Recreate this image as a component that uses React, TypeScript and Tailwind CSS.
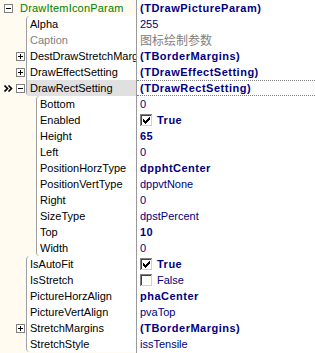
import React from "react";

type Val = { text: string; bold?: boolean; gray?: boolean; check?: boolean; cjk?: boolean };
type Row = { name: string; val: Val; exp?: "+" | "-"; sel?: boolean; gray?: boolean };

const segA: Row[] = [
  { name: "Alpha", val: { text: "255" } },
  { name: "Caption", gray: true, val: { text: "图标绘制参数", gray: true, cjk: true } },
  { name: "DestDrawStretchMargi", exp: "+", val: { text: "(TBorderMargins)", bold: true } },
  { name: "DrawEffectSetting", exp: "+", val: { text: "(TDrawEffectSetting)", bold: true } },
  { name: "DrawRectSetting", exp: "-", sel: true, val: { text: "(TDrawRectSetting)", bold: true } },
];

const segB: Row[] = [
  { name: "Bottom", val: { text: "0" } },
  { name: "Enabled", val: { text: "True", bold: true, check: true } },
  { name: "Height", val: { text: "65", bold: true } },
  { name: "Left", val: { text: "0" } },
  { name: "PositionHorzType", val: { text: "dpphtCenter", bold: true } },
  { name: "PositionVertType", val: { text: "dppvtNone" } },
  { name: "Right", val: { text: "0" } },
  { name: "SizeType", val: { text: "dpstPercent" } },
  { name: "Top", val: { text: "10", bold: true } },
  { name: "Width", val: { text: "0" } },
];

const segC: Row[] = [
  { name: "IsAutoFit", val: { text: "True", bold: true, check: true } },
  { name: "IsStretch", val: { text: "False", check: false } },
  { name: "PictureHorzAlign", val: { text: "phaCenter", bold: true } },
  { name: "PictureVertAlign", val: { text: "pvaTop" } },
  { name: "StretchMargins", exp: "+", val: { text: "(TBorderMargins)", bold: true } },
  { name: "StretchStyle", val: { text: "issTensile" } },
];

const gutterRows: Row[] = [...segA, ...segB, ...segC];

function Expander({ sign }: { sign: "+" | "-" }) {
  return (
    <svg width="9" height="9" viewBox="0 0 9 9" shapeRendering="crispEdges" className="block">
      <rect x="0.5" y="0.5" width="8" height="8" fill="white" stroke="#808080" />
      <rect x="2" y="4" width="5" height="1" fill="black" />
      {sign === "+" && <rect x="4" y="2" width="1" height="5" fill="black" />}
    </svg>
  );
}

function Chevrons() {
  return (
    <svg width="9" height="7" viewBox="0 0 9 7" className="block">
      <path d="M0.5 0.5 L3.5 3.5 L0.5 6.5 M4.5 0.5 L7.5 3.5 L4.5 6.5" fill="none" stroke="black" strokeWidth="1.6" />
    </svg>
  );
}

function CheckBox({ on }: { on: boolean }) {
  const check = [
    [3, 5], [4, 6], [5, 7], [6, 6], [7, 5], [8, 4], [9, 3],
  ];
  return (
    <svg width="13" height="13" viewBox="0 0 13 13" shapeRendering="crispEdges" className="block">
      <rect x="0" y="0" width="13" height="13" fill="white" />
      <rect x="0" y="0" width="12" height="1" fill="#808080" />
      <rect x="0" y="0" width="1" height="12" fill="#808080" />
      <rect x="1" y="1" width="10" height="1" fill="#404040" />
      <rect x="1" y="1" width="1" height="10" fill="#404040" />
      <rect x="0" y="12" width="13" height="1" fill="#ffffff" />
      <rect x="12" y="0" width="1" height="13" fill="#ffffff" />
      <rect x="1" y="11" width="11" height="1" fill="#d4d0c8" />
      <rect x="11" y="1" width="1" height="11" fill="#d4d0c8" />
      {on && check.map(([x, y]) => <rect key={x} x={x} y={y} width="1" height="3" fill="black" />)}
    </svg>
  );
}

function NameRow({ r }: { r: Row }) {
  return (
    <div
      className={`h-4 pl-[3px] whitespace-nowrap overflow-hidden leading-4 ${
        r.sel ? "bg-[#e0e0e0]" : ""
      } ${r.gray ? "text-[#808080]" : "text-black"}`}
    >
      {r.name}
    </div>
  );
}

function ValueCell({ r }: { r: Row }) {
  const v = r.val;
  const color = v.gray ? "text-[#808080]" : "text-[#000080]";
  return (
    <div
      className={`h-4 pl-[3px] flex items-center whitespace-nowrap overflow-hidden ${
        r.sel ? "border-y border-dotted border-[#808080]" : ""
      }`}
    >
      {v.check !== undefined && (
        <span className="mr-[4px]">
          <CheckBox on={v.check} />
        </span>
      )}
      <span
        className={`${color} ${v.bold ? "font-bold tracking-[0.5px]" : ""} ${
          v.cjk ? "text-[12px] font-['Noto_Sans_CJK_SC',sans-serif]" : ""
        } leading-4`}
      >
        {v.text}
      </span>
    </div>
  );
}

export default function App() {
  return (
    <div className="w-[315px] h-[353px] overflow-hidden bg-[#fffbf0] flex font-['Liberation_Sans',Arial,sans-serif] text-[11px]">
      {/* name column */}
      <div className="w-[136px] flex flex-col bg-[#fffbf0]">
        <div className="h-4 flex items-center">
          <span className="ml-[4px] mr-[7px]">
            <Expander sign="-" />
          </span>
          <span className="text-[#008000] leading-4 tracking-[0.2px]">DrawItemIconParam</span>
        </div>
        <div className="flex">
          <div className="w-[26px] flex flex-col">
            {gutterRows.map((r) => (
              <div key={r.name} className="h-4 flex items-center">
                <span className="w-[16px] flex justify-center pl-[1px]">{r.sel && <Chevrons />}</span>
                {r.exp && <Expander sign={r.exp} />}
              </div>
            ))}
          </div>
          <div className="flex-1 flex flex-col min-w-0">
            <div className="bg-white border-l border-[#a0a0a0] rounded-l-[4px]">
              {segA.map((r) => (
                <NameRow key={r.name} r={r} />
              ))}
            </div>
            <div className="ml-[10px] bg-white border-l border-[#a0a0a0] rounded-l-[4px]">
              {segB.map((r) => (
                <NameRow key={r.name} r={r} />
              ))}
            </div>
            <div className="bg-white border-l border-[#a0a0a0] rounded-l-[4px]">
              {segC.map((r) => (
                <NameRow key={r.name} r={r} />
              ))}
            </div>
          </div>
        </div>
      </div>
      {/* divider */}
      <div className="w-px bg-[#9a9a9a]" />
      {/* value column */}
      <div className="flex-1 bg-white flex flex-col min-w-0">
        <div className="h-4 pl-[3px] flex items-center whitespace-nowrap">
          <span className="text-[#000080] font-bold tracking-[0.5px] leading-4">(TDrawPictureParam)</span>
        </div>
        {gutterRows.map((r) => (
          <ValueCell key={r.name + "v"} r={r} />
        ))}
      </div>
    </div>
  );
}
